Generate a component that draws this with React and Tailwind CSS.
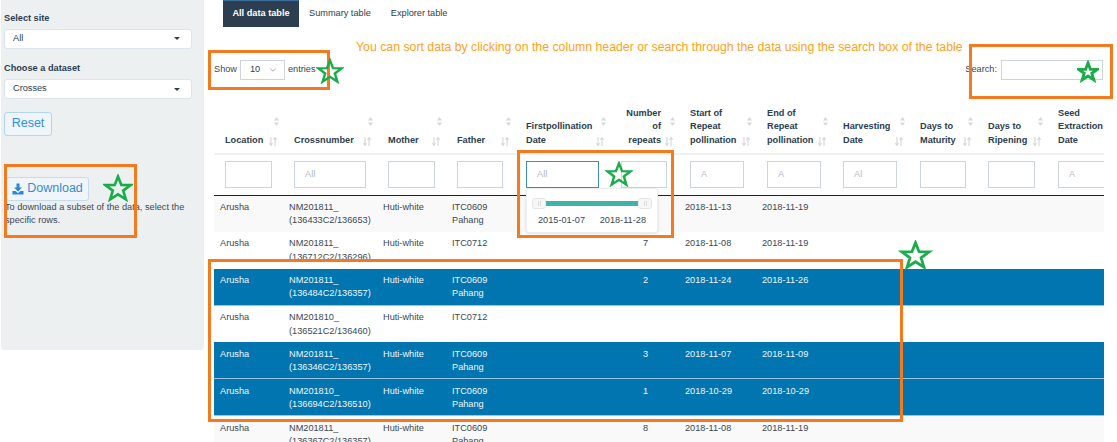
import React from "react";
import { ChevronDown } from "lucide-react";

const cols = [69, 94, 69, 69, 95, 69, 77, 76, 77, 68, 70, 80];
const heads = [
  { l: ["Location"] },
  { l: ["Crossnumber"] },
  { l: ["Mother"] },
  { l: ["Father"] },
  { l: ["Firstpollination", "Date"] },
  { l: ["Number", "of", "repeats"], right: true },
  { l: ["Start of", "Repeat", "pollination"] },
  { l: ["End of", "Repeat", "pollination"] },
  { l: ["Harvesting", "Date"] },
  { l: ["Days to", "Maturity"] },
  { l: ["Days to", "Ripening"] },
  { l: ["Seed", "Extraction", "Date"], noSort: true },
];
const filters = [
  { w: "w-[47px]" },
  { w: "w-[72px]", p: "All" },
  { w: "w-[47px]" },
  { w: "w-[46px]" },
  { w: "w-[73px]", p: "All", focus: true },
  { w: "w-[46px]" },
  { w: "w-[54px]", p: "A" },
  { w: "w-[54px]", p: "A" },
  { w: "w-[54px]", p: "Al" },
  { w: "w-[46px]" },
  { w: "w-[47px]" },
  { w: "w-[54px]", p: "A" },
];
const rows = [
  { c: "NM201811_", d: "(136433C2/136653)", f: ["ITC0609", "Pahang"], n: "", s: "2018-11-13", e: "2018-11-19", bg: "bg-[#f9f9f9] text-[#3a4755]" },
  { c: "NM201811_", d: "(136712C2/136296)", f: ["ITC0712"], n: "7", s: "2018-11-08", e: "2018-11-19", bg: "bg-white text-[#3a4755]" },
  { c: "NM201811_", d: "(136484C2/136357)", f: ["ITC0609", "Pahang"], n: "2", s: "2018-11-24", e: "2018-11-26", bg: "bg-[#0075b0] text-[#f2f6fa] border-b border-[#9cc4e0]" },
  { c: "NM201810_", d: "(136521C2/136460)", f: ["ITC0712"], n: "", s: "", e: "", bg: "bg-white text-[#3a4755]" },
  { c: "NM201811_", d: "(136346C2/136357)", f: ["ITC0609", "Pahang"], n: "3", s: "2018-11-07", e: "2018-11-09", bg: "bg-[#0075b0] text-[#f2f6fa] border-b border-[#9cc4e0]" },
  { c: "NM201810_", d: "(136694C2/136510)", f: ["ITC0609", "Pahang"], n: "1", s: "2018-10-29", e: "2018-10-29", bg: "bg-[#0075b0] text-[#f2f6fa] border-b border-[#9cc4e0]" },
  { c: "NM201811_", d: "(136367C2/136357)", f: ["ITC0609", "Pahang"], n: "8", s: "2018-11-08", e: "2018-11-19", bg: "bg-[#f9f9f9] text-[#3a4755]" },
];

function Star({ className, heavy }) {
  return (
    <svg viewBox="0 0 30 28" className={`absolute ${className}`} fill="none" stroke="#1aab4b" strokeWidth={heavy ? 4 : 2.6} strokeLinejoin="miter">
      <path d="M15 2.5 L18.3 10.9 L27.6 11.1 L20.2 16.6 L22.9 25.4 L15 20.3 L7.1 25.4 L9.8 16.6 L2.4 11.1 L11.7 10.9 Z" />
    </svg>
  );
}

function Box({ className }) {
  return <div className={`absolute border-[3px] border-[#f47a20] pointer-events-none ${className}`} />;
}

function Caret() {
  return <span className="w-0 h-0 border-l-[3.5px] border-r-[3.5px] border-t-[3.5px] border-l-transparent border-r-transparent border-t-[#2c3e50]" />;
}

function SortDiamond() {
  return (
    <svg viewBox="0 0 5 9" className="absolute right-[4px] top-[12px] w-[5px] h-[9px]" fill="#d5d8dc">
      <path d="M2.5 0 L5 3.6 H0 Z M2.5 9 L0 5.4 H5 Z" />
    </svg>
  );
}

function SortArrows() {
  return (
    <svg viewBox="0 0 9 10" className="absolute right-[6px] bottom-[7px] w-[8px] h-[9px]" fill="none" stroke="#d5d8dc" strokeWidth="1.3">
      <path d="M2.2 0 V9 M0.4 7 L2.2 9.4 L4 7 M6.8 10 V1 M5 3 L6.8 0.6 L8.6 3" />
    </svg>
  );
}

function SelectBox({ children, className }) {
  return (
    <div className={`flex items-center justify-between h-5 w-[188px] bg-white border border-[#dce4ec] rounded-[3px] pl-2 pr-[11px] text-[#2c3e50] ${className}`}>
      <span>{children}</span>
      <Caret />
    </div>
  );
}

function Handle() {
  return (
    <span className="w-[14px] h-[11px] bg-[#f7f7f7] border border-[#e6e6e6] rounded-[3px] shrink-0 flex items-center justify-center gap-px">
      <span className="w-px h-[5px] bg-[#dcdcdc]" />
      <span className="w-px h-[5px] bg-[#dcdcdc]" />
    </span>
  );
}

export default function App() {
  return (
    <div className="relative flex h-[442px] w-[1117px] overflow-hidden bg-white text-[9.2px] leading-[13.3px] text-[#3a4755] font-['Liberation_Sans',sans-serif]">
      <aside className="ml-px w-[203px] h-[350px] bg-[#ecf0f1] rounded-b-[3px] pl-[3px] flex flex-col items-start shrink-0">
        <label className="mt-[12px] font-bold text-[#2c3e50]">Select site</label>
        <SelectBox className="mt-[3.5px]">All</SelectBox>
        <label className="mt-[13.5px] font-bold text-[#2c3e50]">Choose a dataset</label>
        <SelectBox className="mt-[3.5px]">Crosses</SelectBox>
        <button className="mt-[13px] h-6 w-12 border border-[#b4d5f0] rounded-[3px] bg-[#f0f5f9] text-[12.5px] text-[#2f8fee]">Reset</button>
        <button className="mt-[41px] ml-[2px] h-6 w-[83px] border border-[#c5dcee] rounded-[3px] bg-[#f0f5f9] text-[12.5px] text-[#3a8ccb] flex items-center justify-center gap-[3px]">
          <svg viewBox="0 0 12 12" className="w-3 h-3" fill="#2a86de">
            <path d="M4.5 0.5 H7.5 V4.5 H10 L6 8.4 L2 4.5 H4.5 Z M0.5 8 H3.6 L6 10.2 L8.4 8 H11.5 V11.5 H0.5 Z" />
          </svg>
          Download
        </button>
        <p className="ml-px w-[190px] text-[#3a4755] leading-[13.3px]">To download a subset of the data, select the specific rows.</p>
      </aside>

      <main className="ml-[10px] w-[890px] flex flex-col shrink-0">
        <nav className="flex items-stretch h-[27px] ml-[9px] shrink-0">
          <div className="w-[76px] flex items-center justify-center bg-[#2c3e50] text-white font-bold border-t border-[#3c6f9c]">All data table</div>
          <div className="ml-[10px] flex items-center text-[#2c3e50]">Summary table</div>
          <div className="ml-[20px] flex items-center text-[#2c3e50]">Explorer table</div>
        </nav>

        <p className="mt-[13px] ml-[142px] h-[14px] shrink-0 text-[12.3px] leading-[14px] text-[#ffa31a] whitespace-nowrap">You can sort data by clicking on the column header or search through the data using the search box of the table</p>

        <div className="mt-[6px] h-5 shrink-0 flex items-center justify-between">
          <div className="flex items-center">
            <span>Show</span>
            <div className="ml-[3px] w-[45px] h-5 border border-[#ced4dc] flex items-center justify-between pl-[9px] pr-[6px] text-[#2c3e50]">
              <span>10</span>
              <ChevronDown className="w-[10px] h-[10px] text-[#6b7885]" strokeWidth={1.5} />
            </div>
            <span className="ml-[3px]">entries</span>
          </div>
          <div className="flex items-center mr-px">
            <span>Search:</span>
            <div className="ml-[4px] w-[102px] h-5 border border-[#ced4dc] bg-white" />
          </div>
        </div>

        <div className="mt-[25px] w-[890px] shrink-0 overflow-hidden">
          <table className="table-fixed border-collapse w-[913px]">
            <colgroup>
              {cols.map((w, i) => (
                <col key={i} style={{ width: w }} />
              ))}
            </colgroup>
            <thead>
              <tr className="h-[49px] border-b-2 border-[#f0f1f2]">
                {heads.map((h, i) => (
                  <th key={i} className={`relative align-bottom pl-[11px] pb-[6px] font-bold text-[#2c3e50] leading-[13.3px] ${h.right ? "text-right pr-[18px]" : "text-left"}`}>
                    {h.l.map((t) => (
                      <div key={t} className="whitespace-nowrap">{t}</div>
                    ))}
                    {!h.noSort && <SortDiamond />}
                    {!h.noSort && <SortArrows />}
                  </th>
                ))}
              </tr>
              <tr className="h-[41px] border-b border-[#222]">
                {filters.map((f, i) => (
                  <td key={i} className="pl-[11px] align-middle">
                    <div className={`${f.w} h-[27px] flex items-center pl-[10px] border text-[#b4bcc4] bg-white ${f.focus ? "border-[#3e8cb8]" : "border-[#ced4dc]"}`}>{f.p}</div>
                  </td>
                ))}
              </tr>
            </thead>
            <tbody>
              {rows.map((r, i) => (
                <tr key={i} className={`h-[36.8px] ${r.bg}`}>
                  <td className="align-top pl-[6px] pt-[5.5px]">Arusha</td>
                  <td className="align-top pl-[6px] pt-[5.5px] whitespace-nowrap"><div>{r.c}</div><div>{r.d}</div></td>
                  <td className="align-top pl-[6px] pt-[5.5px]">Huti-white</td>
                  <td className="align-top pl-[6px] pt-[5.5px]">{r.f.map((t) => <div key={t}>{t}</div>)}</td>
                  <td />
                  <td className="align-top text-right pr-[31px] pt-[5.5px]">{r.n}</td>
                  <td className="align-top pl-[6px] pt-[5.5px]">{r.s}</td>
                  <td className="align-top pl-[6px] pt-[5.5px]">{r.e}</td>
                  <td /><td /><td /><td />
                </tr>
              ))}
            </tbody>
          </table>
        </div>
      </main>

      <div className="absolute left-[526px] top-[188px] w-[132px] h-[45px] bg-white border border-[#eceeef] rounded-[3px] shadow-[0_1px_3px_rgba(0,0,0,0.12)] px-[5px] pt-[9px]">
        <div className="flex items-center h-[11px]">
          <Handle />
          <span className="flex-1 h-[5px] bg-[#3fb4a6]" />
          <Handle />
        </div>
        <div className="mt-[5px] flex justify-between px-[6px] text-[#3a4755] whitespace-nowrap">
          <span>2015-01-07</span>
          <span>2018-11-28</span>
        </div>
      </div>

      <Box className="left-[208px] top-[50px] w-[122px] h-[40px]" />
      <Box className="left-[969px] top-[44px] w-[144px] h-[55px]" />
      <Box className="left-[517px] top-[150px] w-[157px] h-[88px]" />
      <Box className="left-[4px] top-[164px] w-[133px] h-[74px]" />
      <Box className="left-[208px] top-[259px] w-[695px] h-[163px]" />

      <Star className="left-[316px] top-[58px] w-[28px] h-[26px]" />
      <Star heavy className="left-[1077px] top-[60px] w-[22px] h-[23px]" />
      <Star className="left-[605px] top-[161px] w-[28px] h-[26px]" />
      <Star className="left-[103px] top-[174px] w-[30px] h-[28px]" />
      <Star className="left-[898px] top-[240px] w-[35px] h-[30px]" />
    </div>
  );
}
